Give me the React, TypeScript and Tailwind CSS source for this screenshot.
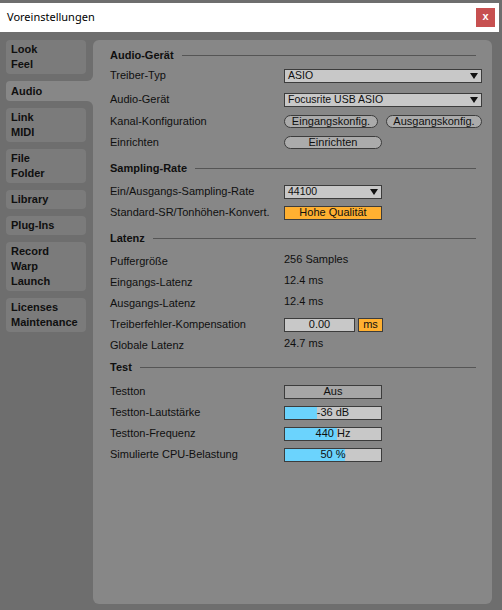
import type { ReactNode } from 'react'

const FONT = { fontFamily: '"Liberation Sans", Arial, sans-serif' }

const tabs: { lines: string[]; active?: boolean }[] = [
  { lines: ['Look', 'Feel'] },
  { lines: ['Audio'], active: true },
  { lines: ['Link', 'MIDI'] },
  { lines: ['File', 'Folder'] },
  { lines: ['Library'] },
  { lines: ['Plug-Ins'] },
  { lines: ['Record', 'Warp', 'Launch'] },
  { lines: ['Licenses', 'Maintenance'] },
]

function Tab({ lines, active }: { lines: string[]; active?: boolean }) {
  if (active) {
    return (
      <div className="relative w-[87px] h-[20px] bg-[#878787] rounded-l-[4px] pl-[5px] flex items-center leading-[15px]">
        {lines[0]}
        <div className="absolute right-0 -top-[6px] w-[6px] h-[6px] bg-[#878787]">
          <div className="w-full h-full bg-[#6e6e6e] rounded-br-[6px]" />
        </div>
        <div className="absolute right-0 -bottom-[6px] w-[6px] h-[6px] bg-[#878787]">
          <div className="w-full h-full bg-[#6e6e6e] rounded-tr-[6px]" />
        </div>
      </div>
    )
  }
  return (
    <div className="w-[80px] bg-[#7b7b7b] rounded-[4px] pl-[5px] py-[2px] leading-[15px]">
      {lines.map((l) => (
        <div key={l}>{l}</div>
      ))}
    </div>
  )
}

function Header({ title, mt }: { title: string; mt: string }) {
  return (
    <div className={`h-[14px] flex items-center gap-[8px] font-bold ${mt}`}>
      <span>{title}</span>
      <div className="flex-1 h-px bg-[#555555] mr-[6px]" />
    </div>
  )
}

function Row({ label, children, mt = '' }: { label: string; children?: ReactNode; mt?: string }) {
  return (
    <div className={`h-[21px] flex items-center ${mt}`}>
      <div className="w-[174px] shrink-0">{label}</div>
      {children}
    </div>
  )
}

function Dropdown({ value, w }: { value: string; w: string }) {
  return (
    <div className={`${w} h-[14px] bg-[#c8c8c8] border border-[#3c3c3c] flex items-center justify-between pl-[3px] pr-[3px] text-[10.5px] leading-none`}>
      <span>{value}</span>
      <svg width="8" height="6" viewBox="0 0 8 6">
        <path d="M0 0 L8 0 L4 6 Z" fill="#111" />
      </svg>
    </div>
  )
}

function Pill({ label, w }: { label: string; w: string }) {
  return (
    <div className={`${w} h-[13px] rounded-full bg-[#ababab] border border-[#3c3c3c] flex items-center justify-center leading-none`}>
      {label}
    </div>
  )
}

function Bar({ value, fill }: { value: string; fill: number }) {
  return (
    <div className="relative w-[98px] h-[14px] bg-[#c8c8c8] border border-[#3c3c3c] flex items-center justify-center leading-none">
      <div className="absolute left-0 top-0 bottom-0 bg-[#6bd3fd]" style={{ width: `${fill}px` }} />
      <span className="relative">{value}</span>
    </div>
  )
}

export default function App() {
  return (
    <div className="w-[502px] h-[610px] bg-[#6e6e6e] overflow-hidden text-[11px] text-[#0f0f0f]" style={FONT}>
      <div className="mt-[3px] w-[499px] h-[29px] bg-white flex items-center justify-between pl-[7px] pr-[4px]">
        <span className="text-[11px] text-black" style={{ fontFamily: '"Noto Sans", "Open Sans", sans-serif' }}>
          Voreinstellungen
        </span>
        <div className="w-[19px] h-[19px] bg-[#c75050] text-white font-bold text-[11px] flex items-center justify-center leading-none pb-[2px]">
          x
        </div>
      </div>

      <div className="flex pt-[8px]">
        <div className="w-[93px] pl-[6px] flex flex-col gap-[7px] font-bold">
          {tabs.map((t) => (
            <Tab key={t.lines[0]} lines={t.lines} active={t.active} />
          ))}
        </div>

        <div className="w-[399px] h-[564px] bg-[#878787] rounded-[6px] pl-[17px] pr-[10px]">
          <Header title="Audio-Gerät" mt="mt-[8px]" />
          <Row label="Treiber-Typ" mt="mt-[3px]">
            <Dropdown value="ASIO" w="w-[198px]" />
          </Row>
          <Row label="Audio-Gerät" mt="mt-[3px]">
            <Dropdown value="Focusrite USB ASIO" w="w-[198px]" />
          </Row>
          <Row label="Kanal-Konfiguration" mt="mt-[1px]">
            <div className="flex gap-[8px]">
              <Pill label="Eingangskonfig." w="w-[94px]" />
              <Pill label="Ausgangskonfig." w="w-[96px]" />
            </div>
          </Row>
          <Row label="Einrichten">
            <Pill label="Einrichten" w="w-[98px]" />
          </Row>

          <Header title="Sampling-Rate" mt="mt-[8px]" />
          <Row label="Ein/Ausgangs-Sampling-Rate" mt="mt-[6px]">
            <Dropdown value="44100" w="w-[98px]" />
          </Row>
          <Row label="Standard-SR/Tonhöhen-Konvert.">
            <div className="w-[98px] h-[14px] bg-[#ffb031] border border-[#3c3c3c] flex items-center justify-center leading-none">
              Hohe Qualität
            </div>
          </Row>

          <Header title="Latenz" mt="mt-[8px]" />
          <Row label="Puffergröße" mt="mt-[6px]">
            <span className="mb-[4px]">256 Samples</span>
          </Row>
          <Row label="Eingangs-Latenz">
            <span className="mb-[4px]">12.4 ms</span>
          </Row>
          <Row label="Ausgangs-Latenz">
            <span className="mb-[4px]">12.4 ms</span>
          </Row>
          <Row label="Treiberfehler-Kompensation">
            <div className="flex gap-[3px]">
              <div className="w-[71px] h-[14px] bg-[#c8c8c8] border border-[#3c3c3c] flex items-center justify-center leading-none">
                0.00
              </div>
              <div className="w-[25px] h-[14px] bg-[#ffb031] border border-[#3c3c3c] flex items-center justify-center leading-none">
                ms
              </div>
            </div>
          </Row>
          <Row label="Globale Latenz">
            <span className="mb-[4px]">24.7 ms</span>
          </Row>

          <Header title="Test" mt="mt-[4px]" />
          <Row label="Testton" mt="mt-[7px]">
            <div className="w-[98px] h-[14px] bg-[#a6a6a6] border border-[#3c3c3c] flex items-center justify-center leading-none">
              Aus
            </div>
          </Row>
          <Row label="Testton-Lautstärke">
            <Bar value="-36 dB" fill={32} />
          </Row>
          <Row label="Testton-Frequenz">
            <Bar value="440 Hz" fill={52} />
          </Row>
          <Row label="Simulierte CPU-Belastung">
            <Bar value="50 %" fill={60} />
          </Row>
        </div>
      </div>
    </div>
  )
}
